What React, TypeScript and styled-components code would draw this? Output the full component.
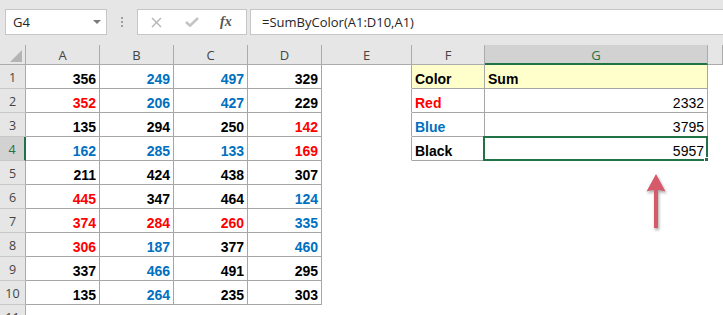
import React from 'react';
import styled, { createGlobalStyle } from 'styled-components';

const GlobalStyle = createGlobalStyle`
  html, body {
    margin: 0;
    padding: 0;
    background: #ffffff;
    overflow: hidden;
  }
`;

type Ink = 'k' | 'r' | 'b';

const INK: Record<Ink, string> = {
  k: '#000000',
  r: '#ff0000',
  b: '#0070c0',
};

const GREEN = '#217346';
const HEAD_BG = '#e6e6e6';
const HEAD_LINE = '#ababab';
const TABLE_LINE = '#a6a6a6';
const YELLOW = '#ffffcc';

const Page = styled.div`
  position: relative;
  width: 723px;
  height: 315px;
  overflow: hidden;
  font-family: 'Liberation Sans', Arial, sans-serif;
`;

const Toolbar = styled.div`
  height: 45px;
  box-sizing: border-box;
  background: ${HEAD_BG};
  display: flex;
  align-items: flex-start;
  padding: 9px 0 0 5px;
  font-family: 'Open Sans', 'Noto Sans', sans-serif;
  font-size: 13px;
  color: #262626;
`;

const Box = styled.div`
  height: 26px;
  box-sizing: border-box;
  background: #ffffff;
  border: 1px solid #c6c6c6;
  display: flex;
  align-items: center;
`;

const NameBox = styled(Box)`
  width: 102px;
  padding: 0 0 0 7px;
  justify-content: space-between;
`;

const DropArrow = styled.span`
  width: 0;
  height: 0;
  margin-right: 5px;
  border-left: 4px solid transparent;
  border-right: 4px solid transparent;
  border-top: 4px solid #7a7a7a;
`;

const Grip = styled.div`
  width: 30px;
  height: 26px;
  display: flex;
  flex-direction: column;
  align-items: center;
  justify-content: center;
  gap: 2px;

  span {
    width: 2px;
    height: 2px;
    background: #a0a0a0;
  }
`;

const FxBox = styled(Box)`
  width: 110px;
  margin-right: 3px;
  padding: 0 0 0 13px;
  gap: 23px;
`;

const FxLabel = styled.span`
  margin-left: -2px;
  color: #555555;
  font-family: 'Liberation Serif', 'Times New Roman', serif;
  font-style: italic;
  font-weight: bold;
  font-size: 14px;
`;

const Formula = styled(Box)`
  flex: 1;
  margin-right: -4px;
  padding-left: 11px;
`;

const Sheet = styled.div`
  display: grid;
  grid-template-columns: 26px 74px 74px 74px 74px 90px 73px 223px 1fr;
  grid-template-rows: 20px repeat(11, 24px);
`;

const Corner = styled.div`
  position: relative;
  background: ${HEAD_BG};
  border-right: 1px solid ${HEAD_LINE};
  border-bottom: 1px solid ${HEAD_LINE};

  &::after {
    content: '';
    position: absolute;
    right: 3px;
    bottom: 2px;
    width: 0;
    height: 0;
    border-left: 12px solid transparent;
    border-bottom: 12px solid #b4b4b4;
  }
`;

const ColHead = styled.div<{ $active?: boolean }>`
  box-sizing: border-box;
  background: ${p => (p.$active ? '#d2d2d2' : HEAD_BG)};
  border-right: 1px solid ${HEAD_LINE};
  border-bottom: ${p => (p.$active ? `2px solid ${GREEN}` : `1px solid ${HEAD_LINE}`)};
  color: ${p => (p.$active ? GREEN : '#444444')};
  font-family: 'Open Sans', 'Noto Sans', sans-serif;
  font-size: 13px;
  display: flex;
  align-items: center;
  justify-content: center;
  padding-top: ${p => (p.$active ? '1px' : '0')};
`;

const RowHead = styled.div<{ $active?: boolean }>`
  box-sizing: border-box;
  background: ${p => (p.$active ? '#d2d2d2' : HEAD_BG)};
  border-right: ${p => (p.$active ? `2px solid ${GREEN}` : `1px solid ${HEAD_LINE}`)};
  border-bottom: 1px solid #c8c8c8;
  color: ${p => (p.$active ? GREEN : '#444444')};
  font-family: 'Open Sans', 'Noto Sans', sans-serif;
  font-size: 12.5px;
  display: flex;
  align-items: center;
  justify-content: center;
  padding-top: 2px;
`;

const Cell = styled.div<{
  $rb?: boolean;
  $bb?: boolean;
  $fill?: string;
  $ink?: string;
  $left?: boolean;
  $plain?: boolean;
}>`
  position: relative;
  box-sizing: border-box;
  background: ${p => p.$fill ?? '#ffffff'};
  border-right: 1px solid ${p => (p.$rb ? TABLE_LINE : 'transparent')};
  border-bottom: 1px solid ${p => (p.$bb ? TABLE_LINE : 'transparent')};
  color: ${p => p.$ink ?? '#000000'};
  font-size: 14px;
  font-weight: ${p => (p.$plain ? 'normal' : 'bold')};
  line-height: 16px;
  display: flex;
  align-items: flex-end;
  justify-content: ${p => (p.$left ? 'flex-start' : 'flex-end')};
  padding: 0 3px 1px ${p => (p.$left ? '3px' : '0')};
`;

const Selection = styled.div`
  position: absolute;
  left: -2px;
  right: -1px;
  top: -1px;
  bottom: -1px;
  border: 2px solid ${GREEN};
  pointer-events: none;

  &::after {
    content: '';
    position: absolute;
    right: -4px;
    bottom: -4px;
    width: 5px;
    height: 5px;
    background: ${GREEN};
    border-left: 1px solid #ffffff;
    border-top: 1px solid #ffffff;
  }
`;

const Arrow = styled.svg`
  position: absolute;
  left: 636px;
  top: 168px;
  filter: drop-shadow(1px 2px 1.5px rgba(0, 0, 0, 0.35));
`;

const data: [number, Ink][][] = [
  [[356, 'k'], [249, 'b'], [497, 'b'], [329, 'k']],
  [[352, 'r'], [206, 'b'], [427, 'b'], [229, 'k']],
  [[135, 'k'], [294, 'k'], [250, 'k'], [142, 'r']],
  [[162, 'b'], [285, 'b'], [133, 'b'], [169, 'r']],
  [[211, 'k'], [424, 'k'], [438, 'k'], [307, 'k']],
  [[445, 'r'], [347, 'k'], [464, 'k'], [124, 'b']],
  [[374, 'r'], [284, 'r'], [260, 'r'], [335, 'b']],
  [[306, 'r'], [187, 'b'], [377, 'k'], [460, 'b']],
  [[337, 'k'], [466, 'b'], [491, 'k'], [295, 'k']],
  [[135, 'k'], [264, 'b'], [235, 'k'], [303, 'k']],
];

const summary: [string, Ink, string][] = [
  ['Red', 'r', '2332'],
  ['Blue', 'b', '3795'],
  ['Black', 'k', '5957'],
];

const App: React.FC = () => {
  const rows: React.ReactNode[] = [];

  for (let r = 0; r < 11; r++) {
    const values = data[r];
    const sumRow = r >= 1 && r <= 3 ? summary[r - 1] : null;

    rows.push(
      <React.Fragment key={r}>
        <RowHead $active={r === 3}>{r + 1}</RowHead>
        {[0, 1, 2, 3].map(c => (
          <Cell key={c} $rb={!!values} $bb={!!values} $ink={values ? INK[values[c][1]] : undefined}>
            {values ? values[c][0] : ''}
          </Cell>
        ))}
        <Cell $rb={r <= 3} />
        {r === 0 ? (
          <>
            <Cell $rb $bb $left $fill={YELLOW}>Color</Cell>
            <Cell $rb $bb $left $fill={YELLOW}>Sum</Cell>
          </>
        ) : sumRow ? (
          <>
            <Cell $rb $bb $left $ink={INK[sumRow[1]]}>{sumRow[0]}</Cell>
            <Cell $rb $bb $plain>
              {sumRow[2]}
              {r === 3 && <Selection />}
            </Cell>
          </>
        ) : (
          <>
            <Cell />
            <Cell />
          </>
        )}
        <Cell />
      </React.Fragment>
    );
  }

  return (
    <Page>
      <GlobalStyle />
      <Toolbar>
        <NameBox>
          G4
          <DropArrow />
        </NameBox>
        <Grip>
          <span />
          <span />
          <span />
        </Grip>
        <FxBox>
          {/* cancel */}
          <svg width="11" height="11" viewBox="0 0 11 11">
            <path d="M1 1 L10 10 M10 1 L1 10" stroke="#b4b4b4" strokeWidth="1.4" fill="none" />
          </svg>
          {/* enter */}
          <svg width="14" height="10" viewBox="0 0 14 10">
            <path d="M1 5 L5 8.6 L13 1" stroke="#c4c4c4" strokeWidth="2.6" fill="none" />
          </svg>
          <FxLabel>fx</FxLabel>
        </FxBox>
        <Formula>=SumByColor(A1:D10,A1)</Formula>
      </Toolbar>
      <Sheet>
        <Corner />
        {['A', 'B', 'C', 'D', 'E', 'F', 'G'].map(l => (
          <ColHead key={l} $active={l === 'G'}>{l}</ColHead>
        ))}
        <ColHead />
        {rows}
      </Sheet>
      <Arrow width="40" height="68" viewBox="0 0 40 68">
        <path d="M20 6 L29.5 23.5 Q24 21.5 22 22 L22 60 L18 60 L18 22 Q16 21.5 10.5 23.5 Z" fill="#d65a69" />
      </Arrow>
    </Page>
  );
};

export default App;
